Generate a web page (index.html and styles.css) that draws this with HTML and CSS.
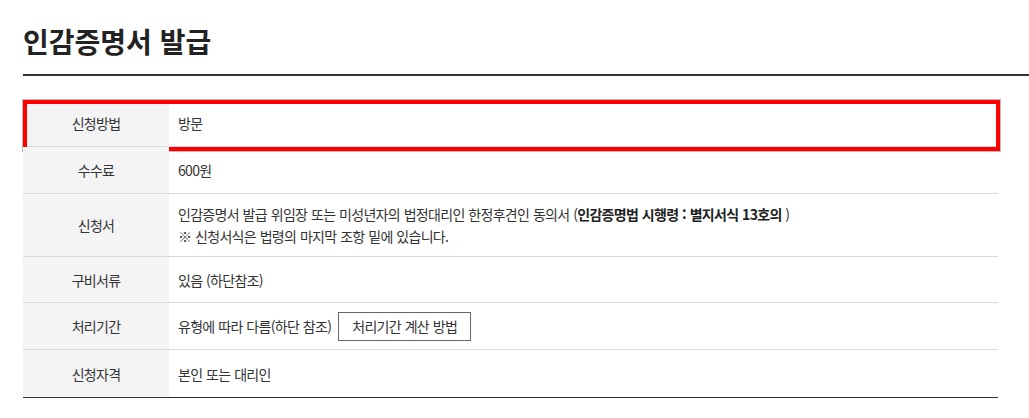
FILE: index.html
```html
<!DOCTYPE html>
<html lang="ko">
<head>
<meta charset="utf-8">
<title>인감증명서 발급</title>
<link rel="stylesheet" href="styles.css">
</head>
<body>
<div class="page">
  <h1 class="title">인감증명서 발급</h1>
  <div class="info">
    <div class="row highlight">
      <div class="label">신청방법</div>
      <div class="value">방문</div>
    </div>
    <div class="row">
      <div class="label">수수료</div>
      <div class="value">600원</div>
    </div>
    <div class="row tall">
      <div class="label">신청서</div>
      <div class="value">
        <p>인감증명서 발급 위임장 또는 미성년자의 법정대리인 한정후견인 동의서 (<b>인감증명법 시행령 : 별지서식 13호의</b> )</p>
        <p>※ 신청서식은 법령의 마지막 조항 밑에 있습니다.</p>
      </div>
    </div>
    <div class="row short">
      <div class="label">구비서류</div>
      <div class="value">있음 (하단참조)</div>
    </div>
    <div class="row">
      <div class="label">처리기간</div>
      <div class="value">유형에 따라 다름(하단 참조) <button class="btn" type="button">처리기간 계산 방법</button></div>
    </div>
    <div class="row last">
      <div class="label">신청자격</div>
      <div class="value">본인 또는 대리인</div>
    </div>
  </div>
</div>
</body>
</html>
```
FILE: styles.css
```css
* { box-sizing: border-box; }
html, body { margin: 0; padding: 0; background: #fff; }
body {
  font-family: "Noto Sans CJK KR", "Noto Sans", sans-serif;
  color: #333;
}
.page { padding-left: 23px; padding-top: 21px; }
.title {
  margin: 0;
  font-size: 28px;
  font-weight: 700;
  line-height: 40px;
  letter-spacing: 0;
  color: #222;
  padding-bottom: 13px;
  border-bottom: 2px solid #333;
}
.info {
  width: 975px;
  margin-top: 24px;
  border-bottom: 1px solid #333;
  font-size: 14px;
  letter-spacing: -0.7px;
  word-spacing: 0.5px;
}
.row {
  position: relative;
  display: grid;
  grid-template-columns: 146px 1fr;
  min-height: 47px;
  border-bottom: 1px solid #d9d9d9;
}
.row.short { min-height: 46px; }
.row.last { border-bottom: none; min-height: 47px; }
.row.tall { min-height: 63px; }
.label {
  background: #f4f4f4;
  display: flex;
  align-items: center;
  justify-content: center;
  color: #333;
}
.value {
  display: flex;
  align-items: center;
  padding-left: 9px;
  color: #333;
}
.row.tall .value {
  flex-direction: column;
  align-items: flex-start;
  justify-content: center;
  padding-top: 8px;
  padding-bottom: 8px;
}
.value p { margin: 0; line-height: 22px; }
.value b { font-weight: 700; color: #222; }
.highlight::after {
  content: "";
  position: absolute;
  top: 0;
  left: 0;
  right: -2px;
  bottom: -5px;
  border: 4px solid #f00;
  box-shadow: 0 0 0 1px #bbb;
  pointer-events: none;
}
.btn {
  margin-left: 7px;
  height: 29px;
  padding: 0 13px;
  border: 1px solid #666;
  background: #fff;
  font-family: inherit;
  font-size: 14px;
  letter-spacing: -0.7px;
  word-spacing: 0.5px;
  color: #333;
  cursor: pointer;
}
```
